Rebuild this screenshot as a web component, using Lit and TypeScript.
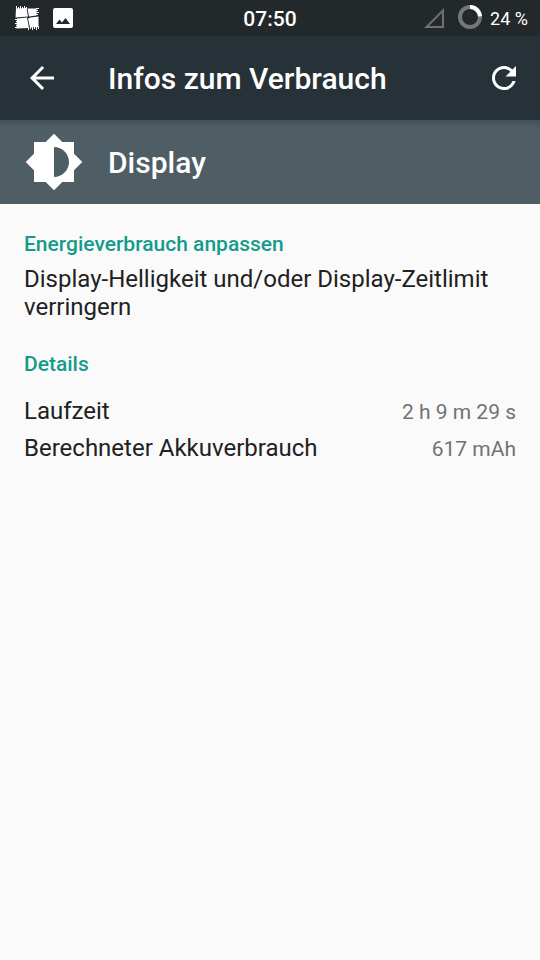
import { LitElement, html, css } from "lit";
import { customElement, property } from "lit/decorators.js";

@customElement("status-bar")
class StatusBar extends LitElement {
  @property() time = "";
  @property({ type: Number }) battery = 0;

  static styles = css`
    :host {
      display: grid;
      grid-template-columns: 1fr auto 1fr;
      align-items: center;
      height: 36px;
      padding: 0 12px;
      background: #23282b;
      color: #fff;
    }
    .group {
      display: flex;
      align-items: center;
      gap: 13px;
    }
    .end {
      justify-content: flex-end;
    }
    svg {
      display: block;
    }
    .time,
    .battery {
      line-height: 26px;
    }
    .time {
      font-size: 21px;
      font-weight: 500;
    }
    .battery {
      display: flex;
      align-items: center;
      gap: 8px;
      font-size: 18px;
    }
    .battery span,
    .time {
      padding-top: 1px;
    }
  `;

  render() {
    return html`
      <div class="group">
        <svg width="28" height="28" viewBox="0 0 28 28" aria-hidden="true">
          <path fill="#fff" d="M4 4.500L14.500 4L16 12.500L3.500 13.500Z M15.500 4.500H24.500V11.500L17 12.500Z M5 14.500L15 13.500L17 24L4.500 24.500Z M16 14.500L18.500 13.500L26.500 12.500V23L18 23.500Z" />
          <path stroke="#fff" stroke-width="1" fill="none" d="M4.500 2V5M6.500 3V5M8.500 2V5M10.500 3V5M12.500 2V5M14.500 3V5M24 4.500H27M24 6.500H26M24 8.500H27M24 10.500H26M3 15.500H5M4 17.500H6M3 19.500H5M4 21.500H5M3 23.500H5M16.500 23V26M18.500 23V25M20.500 23V26M22.500 23V25M24.500 22V26M26.500 22V25" />
        </svg>
        <svg width="20" height="28" viewBox="0 0 20 28" aria-hidden="true">
          <path fill="#fff" fill-rule="evenodd" d="M2 4H18Q20 4 20 6V22Q20 24 18 24H2Q0 24 0 22V6Q0 4 2 4Z M3 20H17L12.500 14L9 18.500L6.500 15.500Z" />
        </svg>
      </div>
      <div class="time">${this.time}</div>
      <div class="group end">
        <svg width="22" height="22" viewBox="0 0 22 22" aria-hidden="true">
          <path d="M3.500 20H20V3.500Z" fill="none" stroke="#6e7173" stroke-width="2" />
        </svg>
        <div class="battery">
          <svg width="24" height="26" viewBox="0 0 24 26" aria-hidden="true">
            <circle cx="12" cy="12" r="10" fill="none" stroke="#74787a" stroke-width="4" />
            <circle cx="12" cy="12" r="10" fill="none" stroke="#fff" stroke-width="4" pathLength="100"
              stroke-dasharray="${this.battery} 100" transform="rotate(-90 12 12)" />
          </svg>
          <span>${this.battery} %</span>
        </div>
      </div>
    `;
  }
}

@customElement("app-root")
class AppRoot extends LitElement {
  private details = [
    ["Laufzeit", "2 h 9 m 29 s"],
    ["Berechneter Akkuverbrauch", "617 mAh"],
  ];

  static styles = css`
    :host {
      display: block;
      min-height: 100vh;
      background: #fafafa;
      color: #212121;
      font-family: Roboto, "Noto Sans", sans-serif;
    }
    svg {
      display: block;
      fill: #fff;
    }
    h1,
    h2,
    h3,
    p {
      margin: 0;
    }
    .toolbar,
    .subject {
      display: flex;
      align-items: center;
      height: 84px;
      padding: 0 18px 0 24px;
      box-sizing: border-box;
      color: #fff;
    }
    .toolbar {
      gap: 48px;
      background: #263238;
    }
    .toolbar button {
      padding: 0;
      border: 0;
      background: none;
    }
    .toolbar h1 {
      flex: 1;
    }
    .subject {
      gap: 24px;
      background: linear-gradient(#435058, #4f5d64 8px);
    }
    h1,
    .subject h2 {
      padding-top: 2px;
      font-size: 30px;
      line-height: 36px;
      font-weight: 500;
    }
    main {
      padding: 28px 24px;
    }
    h3 {
      font-size: 21px;
      line-height: 24px;
      font-weight: 500;
      color: #149b8b;
    }
    p {
      padding: 9px 0 31px;
      font-size: 24px;
      line-height: 28px;
    }
    table {
      width: 100%;
      margin-top: 21px;
      border-collapse: collapse;
    }
    th,
    td {
      height: 37px;
      padding: 0;
      line-height: 28px;
      font-weight: 400;
      vertical-align: baseline;
    }
    th {
      font-size: 24px;
      text-align: left;
    }
    td {
      font-size: 21px;
      text-align: right;
      color: #727272;
    }
  `;

  render() {
    return html`
      <status-bar time="07:50" battery="24"></status-bar>
      <header class="toolbar">
        <button aria-label="Zurück">
          <svg width="36" height="36" viewBox="0 0 24 24">
            <path d="M20 11H7.830l5.590-5.590L12 4l-8 8 8 8 1.410-1.410L7.830 13H20v-2z" />
          </svg>
        </button>
        <h1>Infos zum Verbrauch</h1>
        <button aria-label="Aktualisieren">
          <svg width="36" height="36" viewBox="0 0 24 24">
            <path d="M17.650 6.350C16.200 4.900 14.210 4 12 4c-4.420 0-7.990 3.580-7.990 8s3.570 8 7.990 8c3.730 0 6.840-2.550 7.730-6h-2.080c-.820 2.330-3.040 4-5.650 4-3.310 0-6-2.690-6-6s2.690-6 6-6c1.660 0 3.140.690 4.220 1.780L13 11h7V4l-2.350 2.350z" />
          </svg>
        </button>
      </header>
      <section class="subject">
        <svg width="60" height="60" viewBox="0 0 24 24" aria-hidden="true">
          <path d="M20 15.310L23.310 12 20 8.690V4h-4.690L12 .690 8.690 4H4v4.690L.690 12 4 15.310V20h4.690L12 23.310 15.310 20H20v-4.690zM12 18V6c3.310 0 6 2.690 6 6s-2.690 6-6 6z" />
        </svg>
        <h2>Display</h2>
      </section>
      <main>
        <h3>Energieverbrauch anpassen</h3>
        <p>Display-Helligkeit und/oder Display-Zeitlimit verringern</p>
        <h3>Details</h3>
        <table>
          <tbody>
            ${this.details.map(
              ([label, value]) => html`<tr><th scope="row">${label}</th><td>${value}</td></tr>`
            )}
          </tbody>
        </table>
      </main>
    `;
  }
}
